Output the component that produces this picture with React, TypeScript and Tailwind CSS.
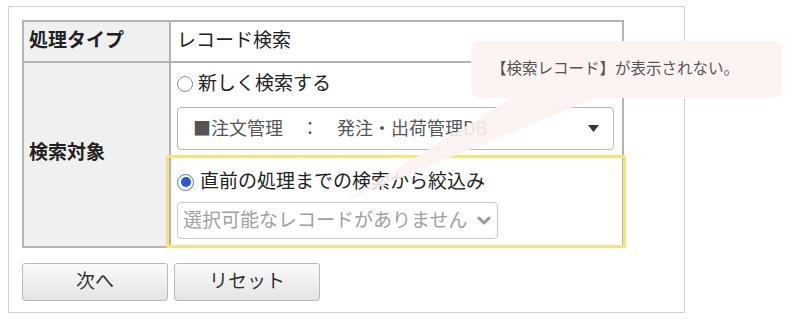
import React from 'react';

const cellBorder = 'border-2 border-[#b4b4b4]';

const RadioOff: React.FC = () => (
  <span className="inline-block w-[16px] h-[16px] rounded-full border border-[#8a8a8a] bg-white mr-[5px] shrink-0" />
);

const RadioOn: React.FC = () => (
  <span className="inline-flex items-center justify-center w-[17px] h-[17px] rounded-full border-[1.5px] border-[#4a74d6] bg-white mr-[6px] shrink-0">
    <span className="w-[10px] h-[10px] rounded-full bg-[#2b57cf]" />
  </span>
);

const App: React.FC = () => {
  return (
    <div className="relative w-[785px] h-[321px] overflow-hidden bg-white font-['Noto_Sans_CJK_JP',sans-serif] text-[#222]">
      {/* FRAME */}
      <div className="ml-[8px] mt-[6px] w-[677px] h-[307px] border border-[#d2d2d2] pl-[13px] pt-[13px]">
        <table className="border-collapse w-[602px]">
          <tbody>
            <tr className="h-[41px]">
              <th className={`${cellBorder} w-[147px] bg-[#f0f0f0] text-left font-bold text-[19px] leading-[24px] pl-[5px] pb-[5px]`}>
                処理タイプ
              </th>
              <td className={`${cellBorder} text-[19px] leading-[24px] pl-[6px] pb-[5px]`}>レコード検索</td>
            </tr>
            <tr className="h-[185px]">
              <th className={`${cellBorder} bg-[#f0f0f0] text-left font-bold text-[19px] leading-[24px] pl-[5px] pb-[8px]`}>
                検索対象
              </th>
              <td className={`${cellBorder} pl-[6px] pr-[8px] pt-[9px] pb-[6px] align-top`}>
                <div className="flex items-center h-[24px] text-[19px]">
                  <RadioOff />
                  <span className="-mt-[3px]">新しく検索する</span>
                </div>
                <div className="mt-[11px] h-[43px] flex items-center rounded-[4px] border border-[#b8b8b8] pl-[15px] pr-[14px]">
                  <span className="flex-1 overflow-hidden whitespace-nowrap text-[18px] text-[#555] -mt-[3px]">
                    ■注文管理　：　発注・出荷管理DB
                  </span>
                  <svg width="11" height="7" viewBox="0 0 11 7" className="ml-[8px]">
                    <polygon points="0,0 11,0 5.5,7" fill="#333" />
                  </svg>
                </div>
                <div className="mt-[20px] flex items-center h-[24px] text-[19px]">
                  <RadioOn />
                  <span className="-mt-[3px]">直前の処理までの検索から絞込み</span>
                </div>
                <div className="mt-[8px] h-[37px] w-[321px] flex items-center rounded-[4px] border border-[#c8c8c8] pl-[5px] pr-[6px]">
                  <span className="flex-1 whitespace-nowrap text-[19px] text-[#a0a0a0] -mt-[3px]">選択可能なレコードがありません</span>
                  <svg width="14" height="9" viewBox="0 0 14 9">
                    <polyline points="2,2 7,7 12,2" fill="none" stroke="#9a9a9a" strokeWidth="3" strokeLinecap="round" strokeLinejoin="round" />
                  </svg>
                </div>
              </td>
            </tr>
          </tbody>
        </table>

        {/* BUTTONS */}
        <div className="flex gap-[6px] mt-[15px]">
          {['次へ', 'リセット'].map(label => (
            <button
              key={label}
              className="w-[146px] h-[38px] rounded-[3px] border border-[#b9b9b9] bg-gradient-to-b from-[#fbfbfb] to-[#e4e4e4] text-[19px] text-[#333] pb-[4px]"
            >
              {label}
            </button>
          ))}
        </div>
      </div>

      {/* highlight */}
      <div className="absolute left-[166px] top-[155px] w-[460px] h-[93px] border-[3px] border-[#f6e37a] rounded-[2px]" />

      {/* callout tail */}
      <svg className="absolute left-0 top-0" width="785" height="321" viewBox="0 0 785 321">
        <polygon points="515,96 600,96 345,201" fill="#fdf2f1" fillOpacity="0.9" />
      </svg>

      {/* callout */}
      <div className="absolute left-[471px] top-[41px] w-[311px] h-[57px] rounded-[8px] bg-[#fdf3f2] flex items-center pl-[20px] pb-[3px] text-[15.5px] text-[#555]">
        【検索レコード】が表示されない。
      </div>
    </div>
  );
};

export default App;
